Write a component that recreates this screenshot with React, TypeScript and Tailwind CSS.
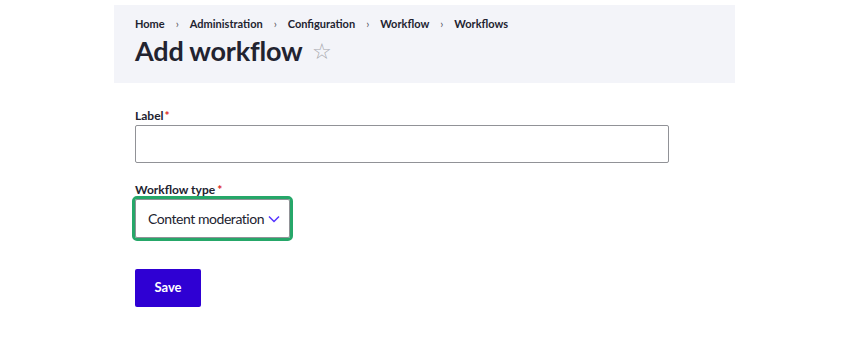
const crumbs = ["Home", "Administration", "Configuration", "Workflow", "Workflows"];

export default function App() {
  return (
    <div className="w-[850px] h-[360px] bg-white text-[#222330]" style={{ fontFamily: 'Lato, sans-serif' }}>
      <div className="pt-[5px] pl-[114px]">
        <div className="w-[621px] h-[78px] bg-[#f3f4f9] pl-[21px] pt-[12px]">
          <nav className="flex items-center text-[11px] font-bold leading-[14px]">
            {crumbs.map((c, i) => (
              <span key={c} className="flex items-center">
                {i > 0 && <span className="mx-[11px] font-normal text-[#545560]">›</span>}
                {c}
              </span>
            ))}
          </nav>
          <div className="flex items-center mt-[2px]">
            <h1 className="text-[27px] font-bold leading-[36px] tracking-[-0.2px]">Add workflow</h1>
            <span className="ml-[9px] text-[22px] leading-none text-[#a6a7ad]">☆</span>
          </div>
        </div>
      </div>

      <form className="pl-[135px] pt-[25px]">
        <label className="flex text-[12px] font-bold leading-[16px]">
          Label<span className="text-[#dc2323] ml-[1px]">*</span>
        </label>
        <input className="mt-[1px] w-[534px] h-[38px] border border-[#919297] rounded-[2px] bg-white" />

        <label className="flex mt-[19px] text-[12px] font-bold leading-[16px]">
          Workflow type<span className="text-[#dc2323] ml-[2px]">*</span>
        </label>
        <div className="mt-[1px] w-[155px] h-[39px] border border-[#919297] rounded-[2px] bg-white flex items-center pl-[12px] text-[14px] tracking-[-0.45px] whitespace-nowrap outline-[3px] outline-solid outline-[#26a769] outline-offset-0">
          Content moderation
          <svg className="ml-[4px]" width="12" height="8" viewBox="0 0 12 8" fill="none">
            <path d="M1 1.5 6 6.5 11 1.5" stroke="#5533ff" strokeWidth="1.5" />
          </svg>
        </div>

        <button type="button" className="mt-[31px] w-[66px] h-[38px] rounded-[2px] bg-[#2f00d3] text-white text-[13px] font-bold">
          Save
        </button>
      </form>
    </div>
  );
}
